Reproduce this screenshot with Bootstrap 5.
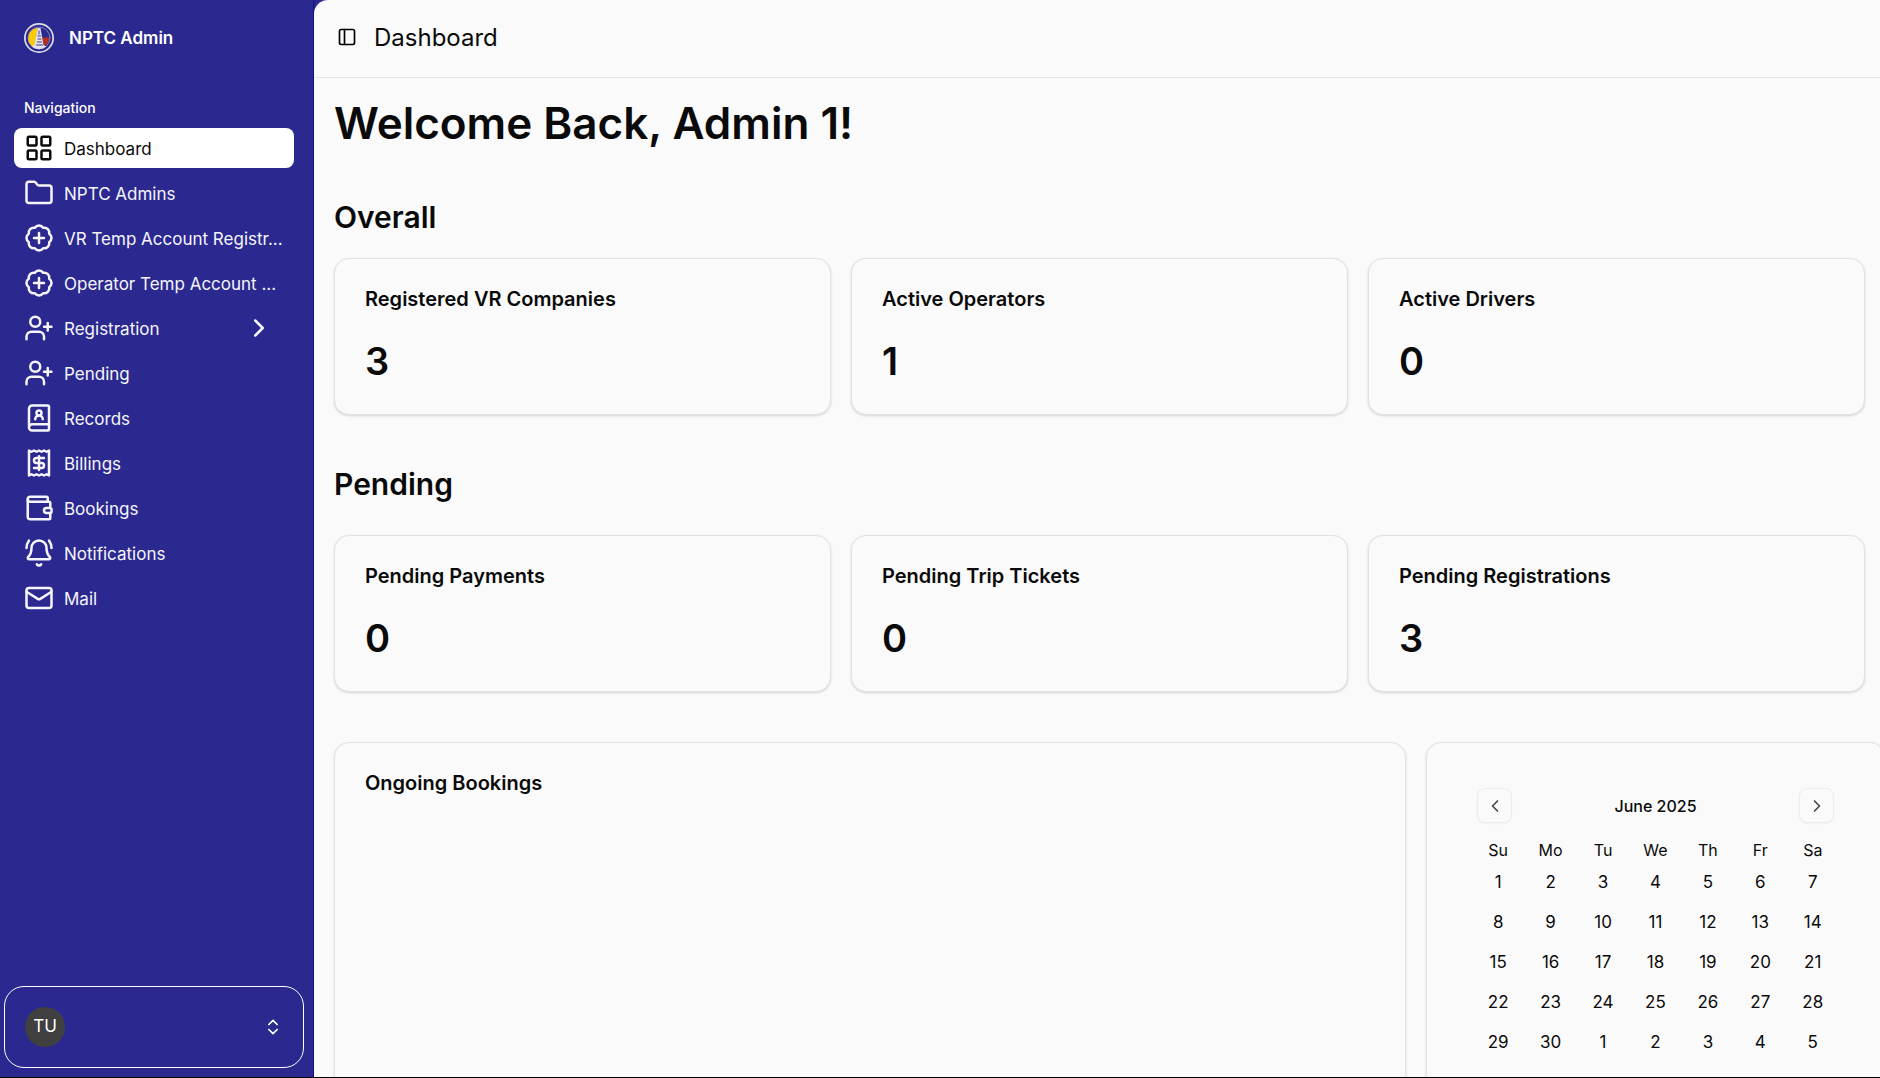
<!DOCTYPE html>
<html lang="en">
<head>
<meta charset="utf-8">
<meta name="viewport" content="width=device-width, initial-scale=1">
<title>Dashboard</title>
<link href="https://cdn.jsdelivr.net/npm/bootstrap@5.3.0/dist/css/bootstrap.min.css" rel="stylesheet">
<style>
body { font-family: Inter, "Liberation Sans", sans-serif; color: #0a0a0a; background: #2b2990; }
svg { fill: none; stroke: currentColor; stroke-width: 2; stroke-linecap: round; stroke-linejoin: round; flex: none; }
.shell { border-bottom: 1px solid #000; }
.side { width: 314px; flex: none; color: #fff; background: #2b2990; border-right: 1px solid #130f85; }
.brand { padding: 23px 24px 21px; gap: 15px; font-size: 17px; line-height: 28px; font-weight: 600; }
.brand .seal { stroke: none; }
.brand .seal .ring { stroke: #7f7dbd; stroke-width: 1; }
.brand .seal .rungs { stroke: #3c3b96; stroke-width: 1; }
.side-label { padding: 23px 24px 9px; font-size: 14px; line-height: 22px; font-weight: 500; }
.side-nav { padding: 0 19px 0 14px; gap: 5px; }
.side-nav a { height: 40px; padding: 0 10px; gap: 10px; border-radius: 8px; color: #f5f5fb; font-size: 17px; line-height: 26px; text-decoration: none; white-space: nowrap; }
.side-nav a span { padding-top: 2px; }
.side-nav a.active { background: #fff; color: #0a0a0a; }
.side-nav svg { width: 30px; height: 30px; }
.side-nav a svg.chev { margin-right: 10px; }
.user-btn { margin: 0 9px 9px 4px; height: 82px; padding: 0 20px; border: 1px solid #fff; border-radius: 20px; background: transparent; color: #fff; }
.avatar { width: 40px; height: 40px; border-radius: 50%; background: #404040; font-size: 17px; }
.page { background: #fafafa; border-top-left-radius: 14px; min-width: 0; }
.topbar { height: 78px; padding: 0 22px 2px; gap: 17px; border-bottom: 1px solid #e5e5e5; font-size: 24px; }
.topbar button { padding: 0 0 1px 1px; border: 0; background: none; line-height: 1; }
.topbar svg, .cal-head svg { display: block; margin: 0 auto; }
.content { padding: 18px 15px 0 20px; }
h1 { font-size: 44px; line-height: 54px; font-weight: 600; margin: 0; }
h2 { font-size: 30px; line-height: 36px; font-weight: 600; margin: 0; }
.overall-title { margin-top: 49px; margin-bottom: 23px; }
.pending-title { margin-top: 51px; margin-bottom: 33px; }
.tile { background: #fafafa; border: 1px solid #e2e2e2; border-radius: 15px; box-shadow: 0 1px 3px rgba(0,0,0,.1), 0 1px 2px rgba(0,0,0,.06); }
.stat { height: 157px; padding: 27px 30px; flex: 1 1 0; }
.tile h3 { font-size: 20px; line-height: 26px; font-weight: 600; margin: 0; }
.stat p { font-size: 38px; line-height: 48px; font-weight: 600; margin: 25px 0 0; }
.tiles { gap: 20px; }
.lower { gap: 20px; margin-top: 50px; margin-right: -20px; }
.bookings { height: 500px; padding: 27px 30px; min-width: 0; }
.cal { width: 459px; flex: none; padding: 45px 45px; }
.cal-head { padding: 0 5px; font-size: 16px; font-weight: 500; }
.cal-head button { width: 35px; height: 35px; padding: 0; border: 1px solid #ededed; border-radius: 8px; background: #fafafa; color: #444; box-shadow: 0 1px 2px rgba(0,0,0,.04); line-height: 1; }
.cal table { width: 100%; table-layout: fixed; text-align: center; margin-top: 15px; }
.cal th { font-size: 16px; font-weight: 400; height: 25px; padding: 0 0 1px; line-height: 24px; }
.cal td { height: 40px; padding: 0; }
.cal td button { border: 0; padding: 0; width: 40px; height: 40px; background: none; color: inherit; font-size: 17px; }
</style>
<script src="https://cdn.jsdelivr.net/npm/bootstrap@5.3.0/dist/js/bootstrap.bundle.min.js"></script>
</head>
<body>
<div class="shell d-flex vh-100 overflow-hidden">
  <aside class="side d-flex flex-column">
    <div class="brand d-flex align-items-center">
      <svg class="seal" width="30" height="30" viewBox="0 0 30 30">
        <circle cx="15" cy="15" r="15" fill="#dedee8"/>
        <circle cx="15" cy="15" r="13.300" fill="#2b2990"/>
        <circle class="ring" cx="15" cy="15" r="11"/>
        <path d="M13.500 5A10.300 10.300 0 0 0 8.500 23.500L11 23z" fill="#fbcb0a"/>
        <path d="M13.500 5A11 11 0 0 0 5 15a11 11 0 0 0 3.500 8.500L11 22z" fill="#fbcb0a"/>
        <path d="M17.500 14.500H25.300A10.300 10.300 0 0 1 20.500 23z" fill="#b8301c"/>
        <path d="M13.500 5h3l1 6 2 11 3 1.500a12 12 0 0 1-15 0l3-1.500 2-11z" fill="#e2e2ea"/>
        <path class="rungs" d="M15 8v3M14 13h2.500M14 16h3M13.500 19h4M12.500 22h6"/>
      </svg>
      <span>NPTC Admin</span>
    </div>
    <div class="side-label">Navigation</div>
    <nav class="side-nav d-flex flex-column">
      <a href="#" class="active d-flex align-items-center"><svg viewBox="0 0 24 24"><rect x="3" y="3" width="7" height="7" rx="1"/><rect x="14" y="3" width="7" height="7" rx="1"/><rect x="14" y="14" width="7" height="7" rx="1"/><rect x="3" y="14" width="7" height="7" rx="1"/></svg><span>Dashboard</span></a>
      <a href="#" class="d-flex align-items-center"><svg viewBox="0 0 24 24"><path d="M20 20a2 2 0 0 0 2-2V8a2 2 0 0 0-2-2h-7.900a2 2 0 0 1-1.690-.9L9.600 3.900A2 2 0 0 0 7.930 3H4a2 2 0 0 0-2 2v13a2 2 0 0 0 2 2Z"/></svg><span>NPTC Admins</span></a>
      <a href="#" class="d-flex align-items-center"><svg viewBox="0 0 24 24"><path d="M3.850 8.620a4 4 0 0 1 4.780-4.770 4 4 0 0 1 6.740 0 4 4 0 0 1 4.780 4.780 4 4 0 0 1 0 6.740 4 4 0 0 1-4.770 4.780 4 4 0 0 1-6.750 0 4 4 0 0 1-4.780-4.770 4 4 0 0 1 0-6.760Z"/><path d="M12 8v8M8 12h8"/></svg><span>VR Temp Account Registr...</span></a>
      <a href="#" class="d-flex align-items-center"><svg viewBox="0 0 24 24"><path d="M3.850 8.620a4 4 0 0 1 4.780-4.770 4 4 0 0 1 6.740 0 4 4 0 0 1 4.780 4.780 4 4 0 0 1 0 6.740 4 4 0 0 1-4.770 4.780 4 4 0 0 1-6.750 0 4 4 0 0 1-4.780-4.770 4 4 0 0 1 0-6.760Z"/><path d="M12 8v8M8 12h8"/></svg><span>Operator Temp Account ...</span></a>
      <a href="#" class="d-flex align-items-center"><svg viewBox="0 0 24 24"><path d="M16 21v-2a4 4 0 0 0-4-4H6a4 4 0 0 0-4 4v2"/><circle cx="9" cy="7" r="4"/><path d="M19 8v6M22 11h-6"/></svg><span class="flex-grow-1">Registration</span><svg class="chev" viewBox="0 0 24 24"><path d="m9 18 6-6-6-6"/></svg></a>
      <a href="#" class="d-flex align-items-center"><svg viewBox="0 0 24 24"><path d="M16 21v-2a4 4 0 0 0-4-4H6a4 4 0 0 0-4 4v2"/><circle cx="9" cy="7" r="4"/><path d="M19 8v6M22 11h-6"/></svg><span>Pending</span></a>
      <a href="#" class="d-flex align-items-center"><svg viewBox="0 0 24 24"><path d="M15 13a3 3 0 1 0-6 0"/><path d="M4 19.500v-15A2.500 2.500 0 0 1 6.500 2H19a1 1 0 0 1 1 1v18a1 1 0 0 1-1 1H6.500a1 1 0 0 1 0-5H20"/><circle cx="12" cy="8" r="2"/></svg><span>Records</span></a>
      <a href="#" class="d-flex align-items-center"><svg viewBox="0 0 24 24"><path d="M4 2v20l2-1 2 1 2-1 2 1 2-1 2 1 2-1 2 1V2l-2 1-2-1-2 1-2-1-2 1-2-1-2 1Z"/><path d="M16 8h-6a2 2 0 1 0 0 4h4a2 2 0 1 1 0 4H8M12 17.500v-11"/></svg><span>Billings</span></a>
      <a href="#" class="d-flex align-items-center"><svg viewBox="0 0 24 24"><path d="M19 7V4a1 1 0 0 0-1-1H5a2 2 0 0 0 0 4h15a1 1 0 0 1 1 1v4h-3a2 2 0 0 0 0 4h3a1 1 0 0 0 1-1v-2a1 1 0 0 0-1-1"/><path d="M3 5v14a2 2 0 0 0 2 2h15a1 1 0 0 0 1-1v-4"/></svg><span>Bookings</span></a>
      <a href="#" class="d-flex align-items-center"><svg viewBox="0 0 24 24"><path d="M10.268 21a2 2 0 0 0 3.464 0M22 8c0-2.300-.8-4.300-2-6M3.262 15.326A1 1 0 0 0 4 17h16a1 1 0 0 0 .74-1.673C19.410 13.956 18 12.499 18 8A6 6 0 0 0 6 8c0 4.499-1.411 5.956-2.738 7.326M4 2C2.800 3.700 2 5.700 2 8"/></svg><span>Notifications</span></a>
      <a href="#" class="d-flex align-items-center"><svg viewBox="0 0 24 24"><rect x="2" y="4" width="20" height="16" rx="2"/><path d="m22 7-8.970 5.700a1.940 1.940 0 0 1-2.060 0L2 7"/></svg><span>Mail</span></a>
    </nav>
    <button class="user-btn d-flex align-items-center justify-content-between mt-auto" type="button" aria-label="Account menu">
      <span class="avatar d-flex align-items-center justify-content-center">TU</span>
      <svg width="20" height="20" viewBox="0 0 24 24"><path d="m7 15 5 5 5-5M7 9l5-5 5 5"/></svg>
    </button>
  </aside>

  <div class="page flex-grow-1 overflow-hidden">
    <header class="topbar d-flex align-items-center">
      <button type="button" aria-label="Toggle sidebar"><svg width="20" height="20" viewBox="0 0 24 24"><rect x="3" y="3" width="18" height="18" rx="2"/><path d="M9 3v18"/></svg></button>
      <span>Dashboard</span>
    </header>
    <main class="content">
      <h1>Welcome Back, Admin 1!</h1>
      <h2 class="overall-title">Overall</h2>
      <div class="tiles d-flex">
        <section class="tile stat"><h3>Registered VR Companies</h3><p>3</p></section>
        <section class="tile stat"><h3>Active Operators</h3><p>1</p></section>
        <section class="tile stat"><h3>Active Drivers</h3><p>0</p></section>
      </div>
      <h2 class="pending-title">Pending</h2>
      <div class="tiles d-flex">
        <section class="tile stat"><h3>Pending Payments</h3><p>0</p></section>
        <section class="tile stat"><h3>Pending Trip Tickets</h3><p>0</p></section>
        <section class="tile stat"><h3>Pending Registrations</h3><p>3</p></section>
      </div>
      <div class="lower d-flex">
        <section class="tile bookings flex-grow-1"><h3>Ongoing Bookings</h3></section>
        <section class="tile cal">
          <div class="cal-head d-flex align-items-center justify-content-between">
            <button type="button" aria-label="Previous month"><svg width="20" height="20" viewBox="0 0 24 24"><path d="m15 18-6-6 6-6"/></svg></button>
            <span>June 2025</span>
            <button type="button" aria-label="Next month"><svg width="20" height="20" viewBox="0 0 24 24"><path d="m9 18 6-6-6-6"/></svg></button>
          </div>
          <table>
            <thead><tr><th>Su</th><th>Mo</th><th>Tu</th><th>We</th><th>Th</th><th>Fr</th><th>Sa</th></tr></thead>
            <tbody>
              <tr><td><button>1</button></td><td><button>2</button></td><td><button>3</button></td><td><button>4</button></td><td><button>5</button></td><td><button>6</button></td><td><button>7</button></td></tr>
              <tr><td><button>8</button></td><td><button>9</button></td><td><button>10</button></td><td><button>11</button></td><td><button>12</button></td><td><button>13</button></td><td><button>14</button></td></tr>
              <tr><td><button>15</button></td><td><button>16</button></td><td><button>17</button></td><td><button>18</button></td><td><button>19</button></td><td><button>20</button></td><td><button>21</button></td></tr>
              <tr><td><button>22</button></td><td><button>23</button></td><td><button>24</button></td><td><button>25</button></td><td><button>26</button></td><td><button>27</button></td><td><button>28</button></td></tr>
              <tr><td><button>29</button></td><td><button>30</button></td><td><button>1</button></td><td><button>2</button></td><td><button>3</button></td><td><button>4</button></td><td><button>5</button></td></tr>
            </tbody>
          </table>
        </section>
      </div>
    </main>
  </div>
</div>
</body>
</html>
